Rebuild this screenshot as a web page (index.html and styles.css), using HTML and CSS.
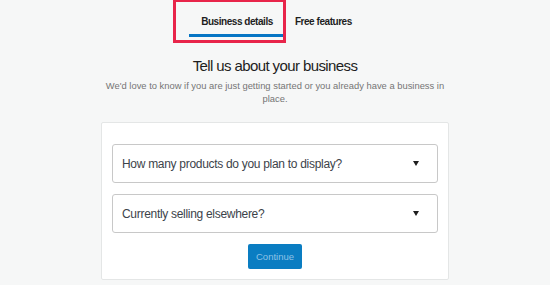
FILE: index.html
```html
<!DOCTYPE html>
<html lang="en">
<head>
    <meta charset="UTF-8">
    <title>Business details</title>

    <link rel="stylesheet" href="styles.css">

</head>
<body>
  <nav class="tabs">
    <div class="tab active">Business details</div>
    <div class="tab">Free features</div>
    <div class="highlight"></div>
  </nav>

  <main class="step">
    <h1 class="title">Tell us about your business</h1>
    <p class="subtitle">We'd love to know if you are just getting started or you already have a business in place.</p>

    <div class="card">
      <div class="select">
        <span>How many products do you plan to display?</span>
        <span class="arrow"></span>
      </div>
      <div class="select">
        <span>Currently selling elsewhere?</span>
        <span class="arrow"></span>
      </div>
      <button class="continue">Continue</button>
    </div>
  </main>
</body>
</html>
```

FILE: styles.css
```css
body {
  margin: 0;
  background: #f6f7f7;
  font-family: "Liberation Sans", Arial, sans-serif;
  color: #1e1e1e;
}

.tabs {
  position: relative;
  display: flex;
  justify-content: center;
  padding-top: 8px;
  padding-left: 1px;
}

.tab {
  padding: 7px 10px 6px;
  font-size: 10px;
  line-height: 13px;
  font-weight: bold;
  letter-spacing: -0.45px;
  color: #1e1e1e;
  border-bottom: 3px solid transparent;
}

.tab.active {
  padding: 7px 12px 6px;
  border-bottom-color: #0675c4;
}

/* red annotation box around the first tab */
.highlight {
  position: absolute;
  left: 173px;
  top: -1px;
  width: 107px;
  height: 38px;
  border: 3px solid #e8254a;
}

.step {
  display: flex;
  flex-direction: column;
  align-items: center;
}

.title {
  margin: 19px 0 0;
  font-size: 15px;
  font-weight: normal;
  line-height: 20px;
  letter-spacing: -0.6px;
}

.subtitle {
  width: 350px;
  margin: 3px 0 0;
  font-size: 9.4px;
  line-height: 13px;
  color: #757575;
  text-align: center;
}

.card {
  display: flex;
  flex-direction: column;
  align-items: center;
  gap: 11px;
  width: 326px;
  margin-top: 17px;
  padding: 21px 10px 10px;
  background: #ffffff;
  border: 1px solid #e4e6e6;
  border-radius: 2px;
}

.select {
  display: flex;
  justify-content: space-between;
  align-items: center;
  box-sizing: border-box;
  width: 100%;
  height: 39px;
  padding: 0 18px 0 9px;
  border: 1px solid #c8c8c8;
  border-radius: 3px;
  font-size: 12px;
  letter-spacing: -0.3px;
  color: #3c434a;
}

.arrow {
  width: 0;
  height: 0;
  border-left: 3.5px solid transparent;
  border-right: 3.5px solid transparent;
  border-top: 5px solid #1e1e1e;
}

.continue {
  width: 54px;
  height: 25px;
  padding: 0;
  border: none;
  border-radius: 2px;
  background: #0a7dc2;
  color: #8ec2e6;
  font: inherit;
  font-size: 9.5px;
}
```
